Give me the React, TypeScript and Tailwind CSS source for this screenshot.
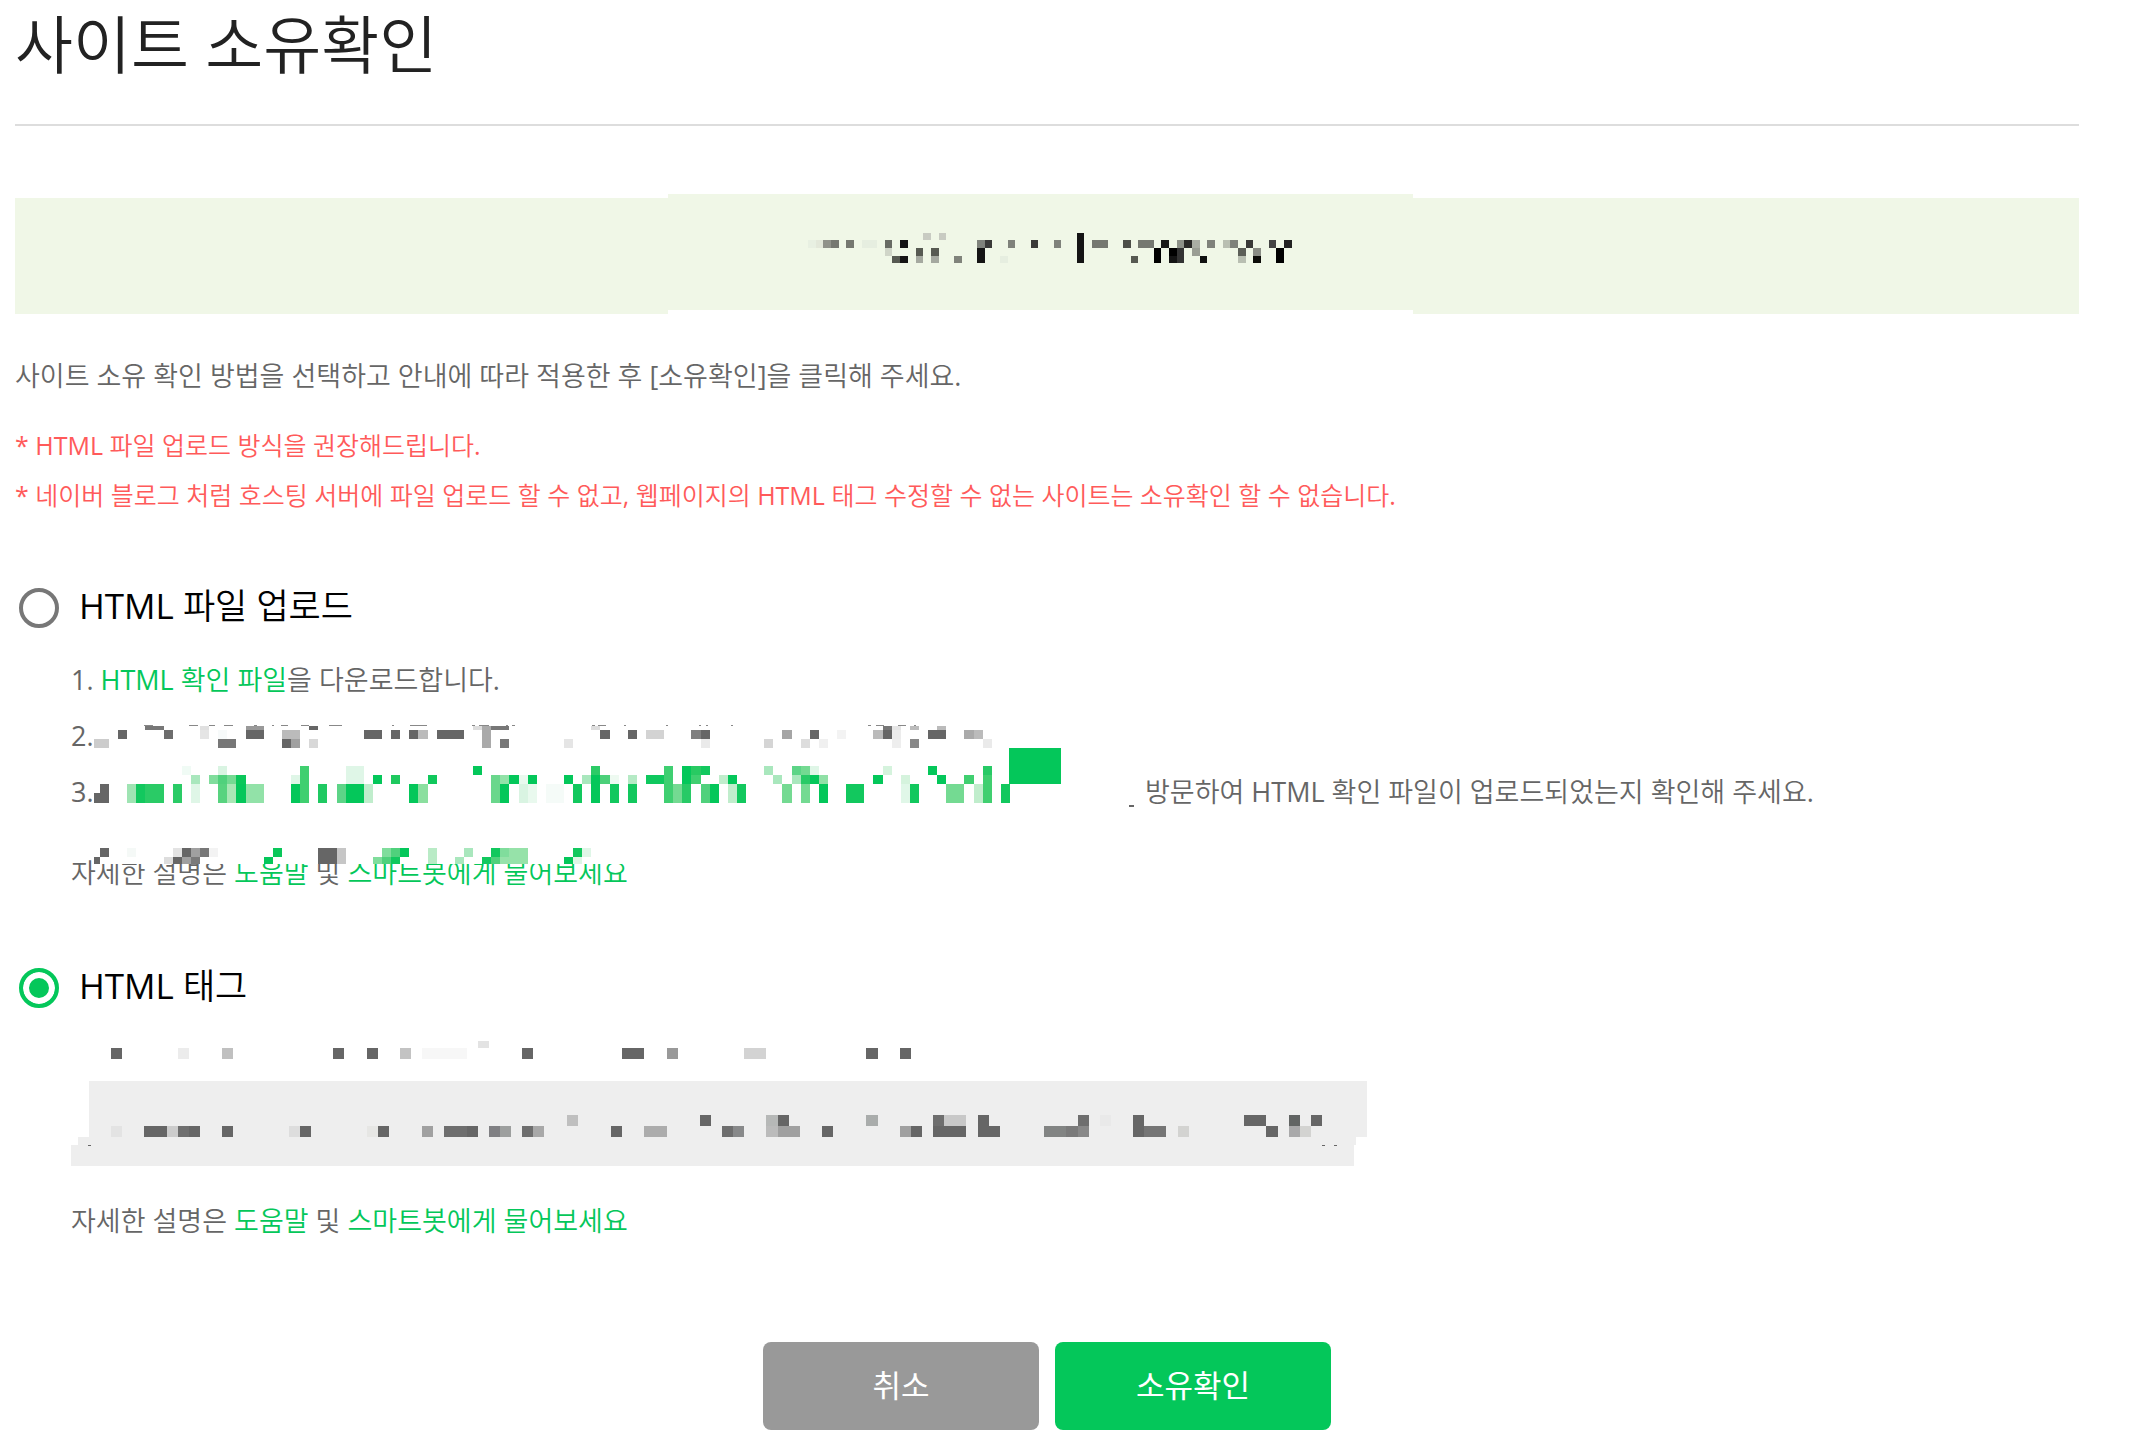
import React, { useState } from 'react';

// [column, span, color]
type Cell = [number, number, string];

type Row = {
  y: number;
  h: number;
  cells: Cell[];
};

type MosaicProps = {
  rows: Row[];
  offset: number;
  cell: number;
};

const G = '#04c75a';
const D = '#666666';

const siteRows: Row[] = [
  { y: 39, h: 7, cells: [[15, 1, '#c8cbc2'], [17, 1, '#c8cbc2'], [35, 1, '#141414']] },
  {
    y: 46,
    h: 8,
    cells: [
      [0, 1, '#e8f0e2'], [1, 1, '#e3e8da'], [2, 1, '#90928a'], [3, 1, '#757870'], [5, 1, '#757870'],
      [7, 2, '#e6eee0'], [10, 1, '#686b64'], [12, 1, '#141414'], [22, 1, '#7f827b'], [23, 1, '#3a3a38'],
      [26, 1, '#7f827b'], [29, 1, '#3a3a38'], [32, 1, '#7f827b'], [35, 1, '#141414'], [37, 2, '#757870'],
      [41, 1, '#4c4f48'], [43, 2, '#757870'], [46, 1, '#1c1c1a'], [48, 1, '#8e9289'], [49, 1, '#2a2a28'],
      [50, 1, '#aaaea4'], [52, 1, '#7f827b'], [54, 1, '#b9bfb2'], [55, 1, '#7f827b'], [57, 1, '#3a3a38'],
      [60, 1, '#444444'], [62, 1, '#222222'],
    ],
  },
  {
    y: 54,
    h: 8,
    cells: [
      [10, 1, '#d0d5c8'], [14, 1, '#575a52'], [16, 1, '#575a52'], [22, 1, '#141414'], [35, 1, '#141414'],
      [45, 1, '#000000'], [47, 1, '#000000'], [48, 1, '#333333'], [50, 1, '#9a9e94'], [56, 1, '#5c5f58'],
      [58, 1, '#8a8d85'], [61, 1, '#000000'],
    ],
  },
  {
    y: 62,
    h: 7,
    cells: [
      [11, 1, '#575a52'], [12, 1, '#141414'], [14, 1, '#a5a9a0'], [16, 1, '#a5a9a0'], [19, 1, '#80837b'],
      [22, 1, '#141414'], [25, 1, '#e6eee0'], [35, 1, '#141414'], [42, 1, '#575a52'], [45, 1, '#000000'],
      [47, 1, '#141414'], [48, 1, '#333333'], [51, 1, '#111111'], [56, 1, '#b9bfb2'], [58, 1, '#0c0c08'],
      [61, 1, '#000000'],
    ],
  },
];

const uploadRows: Row[] = [
  {
    y: 2,
    h: 4,
    cells: [
      [4, 2, '#777777'], [10, 1, '#e0e0e0'], [15, 2, '#999999'], [22, 1, D], [40, 1, '#dddddd'],
      [41, 1, '#aaaaaa'], [42, 2, '#777777'], [53, 1, '#dddddd'], [85, 1, '#777777'], [86, 1, '#e5e5e5'],
      [88, 1, '#bbbbbb'], [91, 1, '#bbbbbb'],
    ],
  },
  {
    y: 6,
    h: 9,
    cells: [
      [1, 1, D], [6, 1, '#6d6d6d'], [10, 1, '#e5e5e5'], [12, 1, '#f7fafa'], [15, 2, D], [19, 2, '#bbbbbb'],
      [28, 2, D], [31, 1, D], [33, 1, D], [34, 1, '#bbbbbb'], [36, 3, D], [41, 1, '#aaaaaa'], [54, 1, D],
      [57, 1, D], [59, 2, '#d3d3d3'], [64, 1, '#808080'], [65, 1, D], [74, 1, '#a5a5a5'], [77, 1, D],
      [80, 1, '#f3f3f3'], [84, 1, '#bbbbbb'], [85, 1, D], [86, 1, '#ececec'], [90, 2, D],
      [94, 1, '#aaaaaa'], [95, 1, '#bbbbbb'],
    ],
  },
  {
    y: 15,
    h: 9,
    cells: [
      [12, 2, '#777777'], [19, 1, D], [20, 1, '#a0a0a0'], [22, 1, '#d8d8d8'], [41, 1, '#aaaaaa'],
      [43, 1, '#777777'], [50, 1, '#e5e5e5'], [65, 1, '#eaeaea'], [72, 1, '#d5d5d5'], [76, 1, '#dddddd'],
      [78, 1, '#f0f0f0'], [86, 1, '#eeeeee'], [88, 1, '#888888'], [96, 1, '#eaeaea'],
    ],
  },
  {
    y: 42,
    h: 9,
    cells: [
      [8, 1, '#f0fbf5'], [12, 1, '#d9f4e2'], [21, 1, '#40cf70'], [26, 2, '#dff6e7'], [40, 1, G],
      [53, 1, '#2ccb66'], [61, 1, '#3fcf71'], [63, 1, G], [64, 1, '#28ca62'], [65, 1, '#12c85e'],
      [72, 1, '#a9e7bd'], [75, 1, '#5dd487'], [76, 1, '#74da92'], [77, 1, '#dff6e7'], [85, 1, '#d5f3dd'],
      [90, 1, G], [96, 1, '#28ca66'],
    ],
  },
  {
    y: 51,
    h: 9,
    cells: [
      [9, 1, '#a9e7bd'], [11, 1, '#80dd9c'], [12, 1, '#50d17c'], [13, 1, '#74da92'], [14, 1, '#0ac75a'],
      [20, 1, '#dff6e7'], [21, 1, '#40cf70'], [26, 2, '#dff6e7'], [29, 1, G], [31, 1, '#1fc95f'], [35, 1, '#10c85c'],
      [42, 1, '#6ad78c'], [43, 1, '#92e2a8'], [44, 1, G], [45, 1, '#e9f9ee'], [46, 1, G], [50, 1, G],
      [52, 1, '#a9e7bd'], [53, 1, G], [54, 1, '#4cd07a'], [55, 1, '#eefaf1'], [57, 1, '#b5eac5'],
      [59, 2, '#0fc85e'], [61, 1, '#3fcf71'], [63, 1, G], [64, 1, '#40cf70'], [67, 1, '#c0edcc'],
      [68, 1, G], [73, 1, '#a9e7bd'], [75, 1, '#a9e7bd'], [76, 1, '#28ca66'], [77, 1, G],
      [78, 1, '#90e0a6'], [84, 1, G], [87, 1, '#d5f3dd'], [91, 1, G], [94, 1, '#40cf70'],
      [96, 1, '#40cf70'],
    ],
  },
  {
    y: 60,
    h: 19,
    cells: [
      [2, 1, '#9fe4b3'], [3, 1, '#12c85e'], [4, 2, '#2acb66'], [7, 1, '#2acb66'], [9, 1, '#dff6e7'],
      [12, 1, '#58d37f'], [13, 1, '#a9e7b5'], [14, 1, G], [15, 2, '#92e2a8'], [20, 1, G],
      [21, 1, '#40cf70'], [23, 1, '#1fc962'], [25, 1, '#5dd487'], [26, 2, G], [28, 1, '#c0edcc'],
      [33, 1, G], [34, 1, '#8bdf9f'], [42, 1, '#6ad78c'], [43, 1, G], [45, 1, '#d9f4e2'],
      [46, 1, '#e9f9ee'], [48, 2, '#f5fbf8'], [51, 1, '#12c85e'], [53, 1, G], [55, 1, '#12c85e'],
      [57, 1, '#12c85e'], [61, 1, '#3fcf71'], [62, 1, '#74da92'], [63, 1, '#28ca66'],
      [65, 1, '#50d17c'], [66, 1, G], [68, 1, '#c0edcc'], [69, 1, '#12c85e'], [74, 1, '#74da92'],
      [76, 1, '#74da92'], [78, 1, G], [81, 2, '#12c85e'], [87, 1, '#e0f7e8'], [88, 1, '#12c85e'],
      [92, 2, '#74da92'], [95, 1, '#c0edcc'], [96, 1, '#40cf70'], [98, 1, '#12c85e'],
    ],
  },
  {
    y: 124,
    h: 9,
    cells: [
      [2, 1, '#f5f9f7'], [7, 1, '#e3e3e3'], [8, 1, D], [9, 1, '#a0a0a0'], [10, 1, '#777777'],
      [11, 1, '#f3f3f3'], [18, 1, '#0ac75a'], [23, 2, D], [25, 1, '#c6c6c6'], [30, 1, '#80dd9c'],
      [31, 1, '#50d17c'], [32, 1, G], [35, 1, '#b9ebc6'], [39, 1, '#a9e7bd'], [42, 1, '#12c85e'],
      [43, 1, '#80dd9c'], [44, 2, '#96e2a9'], [51, 1, '#12c85e'], [52, 1, '#dff6e7'],
    ],
  },
  {
    y: 133,
    h: 7,
    cells: [
      [6, 1, '#dddddd'], [7, 1, D], [8, 1, '#a0a0a0'], [9, 1, '#7a7a7a'], [17, 1, G], [23, 2, D],
      [25, 1, '#c6c6c6'], [29, 1, '#80dd9c'], [30, 1, '#50d17c'], [31, 1, '#12c85e'], [35, 1, '#b9ebc6'],
      [38, 1, '#a9e7bd'], [41, 1, '#12c85e'], [42, 1, '#50d17c'], [43, 3, '#96e2a9'], [50, 1, G],
      [51, 1, '#dff6e7'],
    ],
  },
];

const tagRows: Row[] = [
  { y: 0, h: 7, cells: [[33, 1, '#e3e3e3']] },
  {
    y: 7,
    h: 11,
    cells: [
      [0, 1, D], [6, 1, '#ececec'], [10, 1, '#c0c0c0'], [20, 1, D], [23, 1, D], [26, 1, '#c3c3c3'],
      [28, 4, '#f7f7f7'], [37, 1, D], [46, 2, D], [50, 1, '#999999'], [57, 2, '#d3d3d3'], [68, 1, D],
      [71, 1, D],
    ],
  },
  {
    y: 74,
    h: 11,
    cells: [
      [41, 1, '#bfbfbf'], [53, 1, D], [59, 1, '#b6b8b7'], [60, 1, D], [68, 1, '#a9acab'],
      [74, 1, '#6e6e6e'], [75, 2, '#c8c8c8'], [78, 1, D], [87, 1, '#6e6e6e'], [89, 1, '#e9e9e9'],
      [92, 1, D], [102, 2, D], [106, 1, '#626564'], [108, 1, D],
    ],
  },
  {
    y: 85,
    h: 11,
    cells: [
      [0, 1, '#e3e3e3'], [3, 2, D], [5, 1, '#cccccc'], [6, 1, '#6f6f6f'], [7, 1, D], [10, 1, D],
      [16, 1, '#dddddd'], [17, 1, D], [23, 1, '#e6e6e4'], [24, 1, D], [28, 1, '#a0a0a0'],
      [30, 2, '#6e6e6e'], [32, 1, D], [34, 1, '#808083'], [35, 1, '#9d9f9e'], [37, 1, '#6e6e6e'],
      [38, 1, '#a8a8a8'], [45, 1, D], [48, 2, '#acacac'], [55, 1, '#6e6e6e'], [56, 1, '#88898a'],
      [59, 1, '#bbbbbb'], [60, 2, '#a0a0a0'], [64, 1, D], [71, 1, '#a0a0a0'], [72, 1, D], [74, 3, D],
      [78, 2, D], [84, 2, '#828483'], [86, 1, '#7a7a7a'], [87, 1, '#888888'], [92, 1, D],
      [93, 2, '#757575'], [96, 1, '#d3d3d1'], [104, 1, D], [106, 1, '#a9a9aa'], [107, 1, '#d3d3d1'],
    ],
  },
];

// tops of the covered text line: [x, width]
const slivers = [
  [50, 9], [95, 9], [115, 6], [130, 9], [160, 3], [178, 2], [187, 7], [207, 8], [235, 13], [298, 2],
  [316, 10], [325, 8], [378, 3], [385, 10], [412, 2], [418, 3], [498, 3], [504, 8], [530, 2], [572, 2],
  [605, 2], [612, 2], [637, 2], [774, 3], [782, 8], [804, 8], [820, 2],
];

const Mosaic = ({ rows, offset, cell }: MosaicProps) => (
  <g>
    {rows.map((row) =>
      row.cells.map(([col, span, color]) => (
        <rect
          key={`${row.y}-${col}`}
          x={offset + col * cell}
          y={row.y}
          width={span * cell}
          height={row.h}
          fill={color}
        />
      ))
    )}
  </g>
);

const HelpText = () => (
  <p className="text-[27px] leading-[44px]">
    자세한 설명은{' '}
    <a href="#help" className="text-[#04c75a]">도움말</a> 및{' '}
    <a href="#bot" className="text-[#04c75a]">스마트봇에게 물어보세요</a>
  </p>
);

const radioClass =
  'size-10 shrink-0 appearance-none rounded-full border-4 border-[#777] checked:border-[#04c75a] checked:bg-[#04c75a] checked:shadow-[inset_0_0_0_6px_#fff]';

const App = () => {
  const [method, setMethod] = useState('tag');

  return (
    <main className="bg-white pl-[15px] pr-[63px] pb-[18px] font-['Open_Sans','Noto_Sans_CJK_KR_DemiLight','Noto_Sans_CJK_KR',sans-serif] font-normal text-[#666]">
      <header className="border-b-2 border-[#ddd] pb-9">
        <h1 className="text-[63px] leading-[88px] text-[#222]">사이트 소유확인</h1>
      </header>

      <div className="mt-[72px] flex h-[116px]">
        <div className="w-[653px] bg-[#f0f7e7]" />
        <svg
          className="-mt-1 h-[116px] w-[745px] shrink-0 bg-[#f0f7e7]"
          viewBox="0 0 745 116"
          shapeRendering="crispEdges"
          aria-hidden="true"
        >
          <Mosaic rows={siteRows} offset={140} cell={7.68} />
        </svg>
        <div className="flex-1 bg-[#f0f7e7]" />
      </div>

      <p className="mt-10 text-[27px] leading-[44px]">
        사이트 소유 확인 방법을 선택하고 안내에 따라 적용한 후 [소유확인]을 클릭해 주세요.
      </p>
      <div className="mt-[22px] text-[25px] leading-[50px] text-[#ff5a5a]">
        <p>* HTML 파일 업로드 방식을 권장해드립니다.</p>
        <p>* 네이버 블로그 처럼 호스팅 서버에 파일 업로드 할 수 없고, 웹페이지의 HTML 태그 수정할 수 없는 사이트는 소유확인 할 수 없습니다.</p>
      </div>

      <section className="mt-[68px]">
        <label className="flex h-10 items-center gap-5 pl-1 text-[35px] leading-10 text-black">
          <input
            type="radio"
            name="method"
            className={radioClass}
            checked={method === 'file'}
            onChange={() => setMethod('file')}
          />
          <span className="pb-1">HTML 파일 업로드</span>
        </label>

        <div className="relative mt-6 pl-14">
          <ol className="text-[27px] leading-[56px]">
            <li>
              1. <a href="#file" className="text-[#04c75a]">HTML 확인 파일</a>을 다운로드합니다.
            </li>
            <li>2.</li>
            <li className="flex">
              <span className="w-[1074px]">3.</span>
              <span>방문하여 HTML 확인 파일이 업로드되었는지 확인해 주세요.</span>
            </li>
          </ol>
          <div className="mt-[31px]">
            <HelpText />
          </div>
          <svg
            className="absolute left-[79px] top-[72px] h-[140px] w-[1046px]"
            viewBox="0 0 1046 140"
            shapeRendering="crispEdges"
            aria-hidden="true"
          >
            <rect y="2" width="1046" height="138" fill="#fff" />
            {slivers.map(([x, w]) => (
              <rect key={x} x={x} y="1" width={w} height="1" fill="#888" />
            ))}
            <rect y="15" width="15" height="9" fill="#cccccc" />
            <rect x="6" y="60" width="9" height="19" fill={D} />
            <rect y="69" width="6" height="10" fill={D} />
            <rect x="6" y="124" width="9" height="9" fill={D} />
            <rect y="133" width="6" height="7" fill={D} />
            <Mosaic rows={uploadRows} offset={15} cell={9.1} />
            <rect x="915" y="24" width="52" height="36" fill={G} />
            <rect x="1035" y="81" width="5" height="2" fill={D} />
          </svg>
        </div>
      </section>

      <section className="mt-[73px]">
        <label className="flex h-10 items-center gap-5 pl-1 text-[35px] leading-10 text-black">
          <input
            type="radio"
            name="method"
            className={radioClass}
            checked={method === 'tag'}
            onChange={() => setMethod('tag')}
          />
          <span className="pb-1">HTML 태그</span>
        </label>

        <div className="pl-14">
          <svg
            className="mt-[33px] mb-[33px] block h-[125px] w-[1296px]"
            viewBox="0 0 1296 125"
            shapeRendering="crispEdges"
            aria-hidden="true"
          >
            <path d="M18 40H1296V96H1285V104H1283V125H0V104H7V96H18Z" fill="#eeeeee" />
            <Mosaic rows={tagRows} offset={40} cell={11.11} />
            <rect x="17" y="104" width="3" height="1" fill={D} />
            <rect x="1251" y="104" width="3" height="1" fill={D} />
            <rect x="1263" y="104" width="3" height="1" fill={D} />
          </svg>
          <HelpText />
        </div>
      </section>

      <div className="mt-[99px] flex justify-center gap-4 font-['Noto_Sans_CJK_KR',sans-serif] text-[31px] text-white">
        <button type="button" className="h-[88px] w-[276px] rounded-lg bg-[#999] pb-1">
          취소
        </button>
        <button type="button" className="h-[88px] w-[276px] rounded-lg bg-[#04c75a] pb-1">
          소유확인
        </button>
      </div>
    </main>
  );
};

export default App;
